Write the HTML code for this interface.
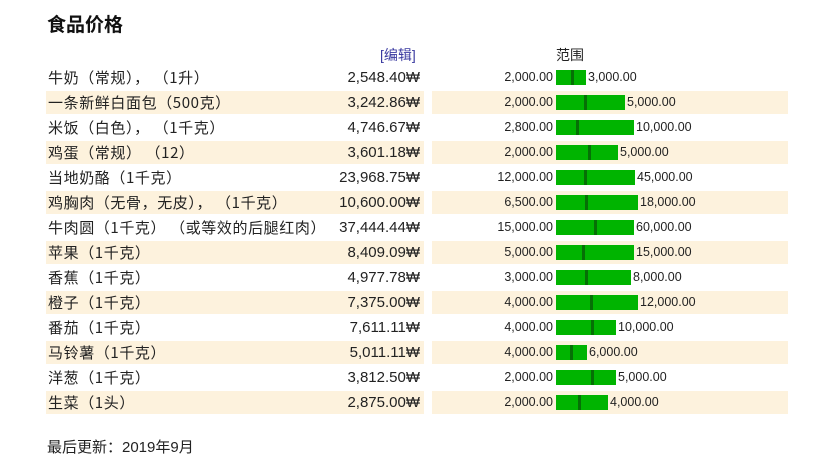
<!DOCTYPE html>
<html><head><meta charset="utf-8"><style>
body{margin:0;background:#fff;font-family:"Liberation Sans","Noto Sans CJK SC",sans-serif;color:#222;width:828px;height:463px;position:relative;overflow:hidden}
.t{position:absolute;left:47px;top:10px;font-size:19px;font-weight:bold;color:#111}
.h{position:absolute;font-size:14px}
.r{position:absolute;left:46px;height:23px;width:742px}
.r.b .c1,.r.b .c2{background:#fdf2dd}
.c1{position:absolute;left:0;width:378px;height:23px}
.c2{position:absolute;left:386px;width:356px;height:23px}
.n{position:absolute;left:2px;top:2px;font-size:15px;line-height:20px;white-space:pre;letter-spacing:0.6px;font-family:"Noto Sans CJK SC",sans-serif}
.p{position:absolute;right:4px;top:3px;font-size:15px;white-space:nowrap}
.mn{position:absolute;right:235px;top:4px;font-size:12.5px}
.bar{position:absolute;left:124px;top:4px;height:15px;background:#00b400}
.bar i{position:absolute;top:0;width:3px;height:15px;background:#067006}
.mx{position:absolute;top:4px;font-size:12.5px}
.f{position:absolute;left:47px;top:436px;font-size:15px}
</style></head><body>
<div class="t">食品价格</div>
<div class="h" style="left:380px;top:45px;color:#3a3aa0">[编辑]</div>
<div class="h" style="left:556px;top:45px">范围</div>
<div class="r" style="top:66px"><div class="c1"><span class="n">牛奶（常规）， （1升）</span><span class="p">2,548.40₩</span></div><div class="c2"><span class="mn">2,000.00</span><div class="bar" style="width:30px"><i style="left:15px"></i></div><span class="mx" style="left:156px">3,000.00</span></div></div>
<div class="r b" style="top:91px"><div class="c1"><span class="n">一条新鲜白面包（500克）</span><span class="p">3,242.86₩</span></div><div class="c2"><span class="mn">2,000.00</span><div class="bar" style="width:69px"><i style="left:28px"></i></div><span class="mx" style="left:195px">5,000.00</span></div></div>
<div class="r" style="top:116px"><div class="c1"><span class="n">米饭（白色）， （1千克）</span><span class="p">4,746.67₩</span></div><div class="c2"><span class="mn">2,800.00</span><div class="bar" style="width:78px"><i style="left:20px"></i></div><span class="mx" style="left:204px">10,000.00</span></div></div>
<div class="r b" style="top:141px"><div class="c1"><span class="n">鸡蛋（常规） （12）</span><span class="p">3,601.18₩</span></div><div class="c2"><span class="mn">2,000.00</span><div class="bar" style="width:62px"><i style="left:32px"></i></div><span class="mx" style="left:188px">5,000.00</span></div></div>
<div class="r" style="top:166px"><div class="c1"><span class="n">当地奶酪（1千克）</span><span class="p">23,968.75₩</span></div><div class="c2"><span class="mn">12,000.00</span><div class="bar" style="width:79px"><i style="left:28px"></i></div><span class="mx" style="left:205px">45,000.00</span></div></div>
<div class="r b" style="top:191px"><div class="c1"><span class="n">鸡胸肉（无骨，无皮）， （1千克）</span><span class="p">10,600.00₩</span></div><div class="c2"><span class="mn">6,500.00</span><div class="bar" style="width:82px"><i style="left:29px"></i></div><span class="mx" style="left:208px">18,000.00</span></div></div>
<div class="r" style="top:216px"><div class="c1"><span class="n">牛肉圆（1千克） （或等效的后腿红肉）</span><span class="p">37,444.44₩</span></div><div class="c2"><span class="mn">15,000.00</span><div class="bar" style="width:78px"><i style="left:38px"></i></div><span class="mx" style="left:204px">60,000.00</span></div></div>
<div class="r b" style="top:241px"><div class="c1"><span class="n">苹果（1千克）</span><span class="p">8,409.09₩</span></div><div class="c2"><span class="mn">5,000.00</span><div class="bar" style="width:78px"><i style="left:26px"></i></div><span class="mx" style="left:204px">15,000.00</span></div></div>
<div class="r" style="top:266px"><div class="c1"><span class="n">香蕉（1千克）</span><span class="p">4,977.78₩</span></div><div class="c2"><span class="mn">3,000.00</span><div class="bar" style="width:75px"><i style="left:29px"></i></div><span class="mx" style="left:201px">8,000.00</span></div></div>
<div class="r b" style="top:291px"><div class="c1"><span class="n">橙子（1千克）</span><span class="p">7,375.00₩</span></div><div class="c2"><span class="mn">4,000.00</span><div class="bar" style="width:82px"><i style="left:34px"></i></div><span class="mx" style="left:208px">12,000.00</span></div></div>
<div class="r" style="top:316px"><div class="c1"><span class="n">番茄（1千克）</span><span class="p">7,611.11₩</span></div><div class="c2"><span class="mn">4,000.00</span><div class="bar" style="width:60px"><i style="left:35px"></i></div><span class="mx" style="left:186px">10,000.00</span></div></div>
<div class="r b" style="top:341px"><div class="c1"><span class="n">马铃薯（1千克）</span><span class="p">5,011.11₩</span></div><div class="c2"><span class="mn">4,000.00</span><div class="bar" style="width:31px"><i style="left:14px"></i></div><span class="mx" style="left:157px">6,000.00</span></div></div>
<div class="r" style="top:366px"><div class="c1"><span class="n">洋葱（1千克）</span><span class="p">3,812.50₩</span></div><div class="c2"><span class="mn">2,000.00</span><div class="bar" style="width:60px"><i style="left:35px"></i></div><span class="mx" style="left:186px">5,000.00</span></div></div>
<div class="r b" style="top:391px"><div class="c1"><span class="n">生菜（1头）</span><span class="p">2,875.00₩</span></div><div class="c2"><span class="mn">2,000.00</span><div class="bar" style="width:52px"><i style="left:22px"></i></div><span class="mx" style="left:178px">4,000.00</span></div></div>
<div class="f">最后更新：2019年9月</div>
</body></html>
